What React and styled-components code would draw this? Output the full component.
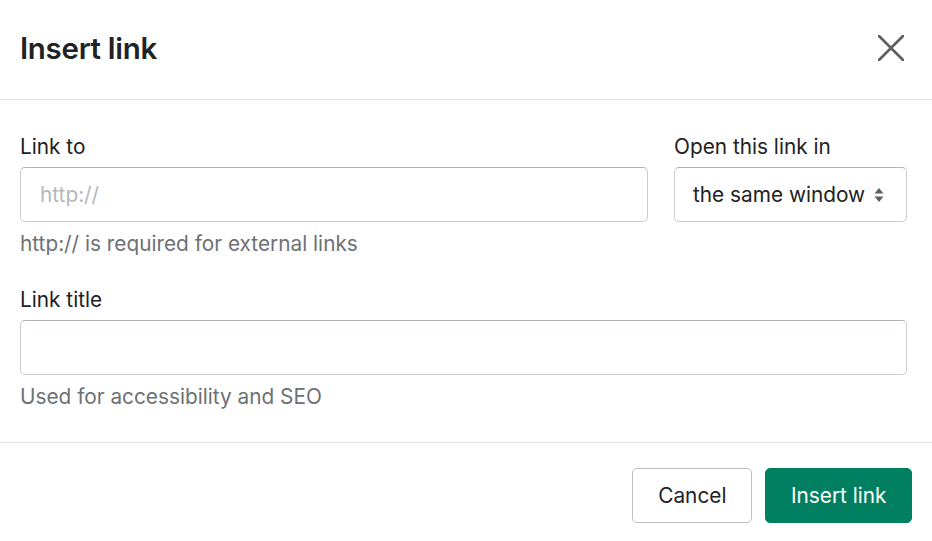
import React from "react";
import { styled, createGlobalStyle } from "styled-components";

const Global = createGlobalStyle`
	html, body {
		margin: 0;
		padding: 0;
		background: #ffffff;
	}
	body {
		font-family: Inter, "Liberation Sans", sans-serif;
		color: #202223;
	}
	* {
		box-sizing: border-box;
	}
`;

const Modal = styled.div`
	width: 932px;
	height: 541px;
	background: #ffffff;
	display: flex;
	flex-direction: column;
	overflow: hidden;
`;

const Header = styled.div`
	height: 100px;
	display: flex;
	align-items: center;
	justify-content: space-between;
	padding: 0 26px 4px 20px;
	border-bottom: 1px solid #e1e3e5;
`;

const Title = styled.h1`
	margin: 0;
	font-size: 29.5px;
	font-weight: 600;
	letter-spacing: -0.3px;
	color: #202223;
`;

const Close = styled.button`
	border: none;
	background: none;
	padding: 0;
	width: 30px;
	height: 30px;
	display: flex;
	align-items: center;
	justify-content: center;
	cursor: pointer;
`;

const Body = styled.div`
	padding: 33px 25px 31px 20px;
	display: flex;
	flex-direction: column;
	gap: 28px;
	border-bottom: 1px solid #e1e3e5;
`;

const Row = styled.div`
	display: flex;
	gap: 26px;
`;

const Field = styled.div`
	display: flex;
	flex-direction: column;
	flex: ${(p) => (p.$grow ? 1 : "none")};
	width: ${(p) => p.$width || "auto"};
`;

const Label = styled.label`
	font-size: 20.8px;
	line-height: 28px;
	margin-bottom: 6px;
	color: #202223;
`;

const Input = styled.input`
	height: 55px;
	border: 1px solid #c9cccf;
	border-top-color: #aeb4b9;
	border-radius: 5px;
	padding: 0 19px;
	font-family: inherit;
	font-size: 20.8px;
	color: #202223;
	outline: none;
	&::placeholder {
		color: #b4b8bc;
	}
`;

const SelectBox = styled.div`
	height: 55px;
	border: 1px solid #c9cccf;
	border-top-color: #aeb4b9;
	border-radius: 5px;
	padding: 0 22px 0 18px;
	display: flex;
	align-items: center;
	justify-content: space-between;
	font-size: 20.8px;
	color: #202223;
`;

const Help = styled.div`
	margin-top: 8px;
	font-size: 20.8px;
	line-height: 28px;
	color: #6d7175;
`;

const Footer = styled.div`
	display: flex;
	justify-content: flex-end;
	gap: 13px;
	padding: 25px 20px 0 20px;
`;

const Button = styled.button`
	height: 55px;
	padding: 0 ${(p) => (p.$primary ? "24.5px" : "25px")};
	border-radius: 5px;
	font-family: inherit;
	font-size: 20.8px;
	cursor: pointer;
	border: 1px solid ${(p) => (p.$primary ? "#008060" : "#babfc3")};
	background: ${(p) => (p.$primary ? "#008060" : "#ffffff")};
	color: ${(p) => (p.$primary ? "#ffffff" : "#202223")};
	font-weight: 400;
`;

const App = () => {
	return (
		<Modal>
			<Global />
			<Header>
				<Title>Insert link</Title>
				<Close aria-label="Close">
					<svg width="26" height="26" viewBox="0 0 26 26">
						<path
							d="M1 1 L25 25 M25 1 L1 25"
							stroke="#5c5f62"
							strokeWidth="2.6"
							strokeLinecap="round"
						/>
					</svg>
				</Close>
			</Header>
			<Body>
				<Row>
					<Field $grow>
						<Label>Link to</Label>
						<Input placeholder="http://" />
						<Help>http:// is required for external links</Help>
					</Field>
					<Field $width="233px">
						<Label>Open this link in</Label>
						<SelectBox>
							<span>the same window</span>
							<svg width="10" height="16" viewBox="0 0 10 16">
								<path d="M5 1 L9.5 6.5 H0.5 Z" fill="#5c5f62" />
								<path d="M5 15 L9.5 9.5 H0.5 Z" fill="#5c5f62" />
							</svg>
						</SelectBox>
					</Field>
				</Row>
				<Field>
					<Label>Link title</Label>
					<Input />
					<Help>Used for accessibility and SEO</Help>
				</Field>
			</Body>
			<Footer>
				<Button>Cancel</Button>
				<Button $primary>Insert link</Button>
			</Footer>
		</Modal>
	);
};

export default App;
